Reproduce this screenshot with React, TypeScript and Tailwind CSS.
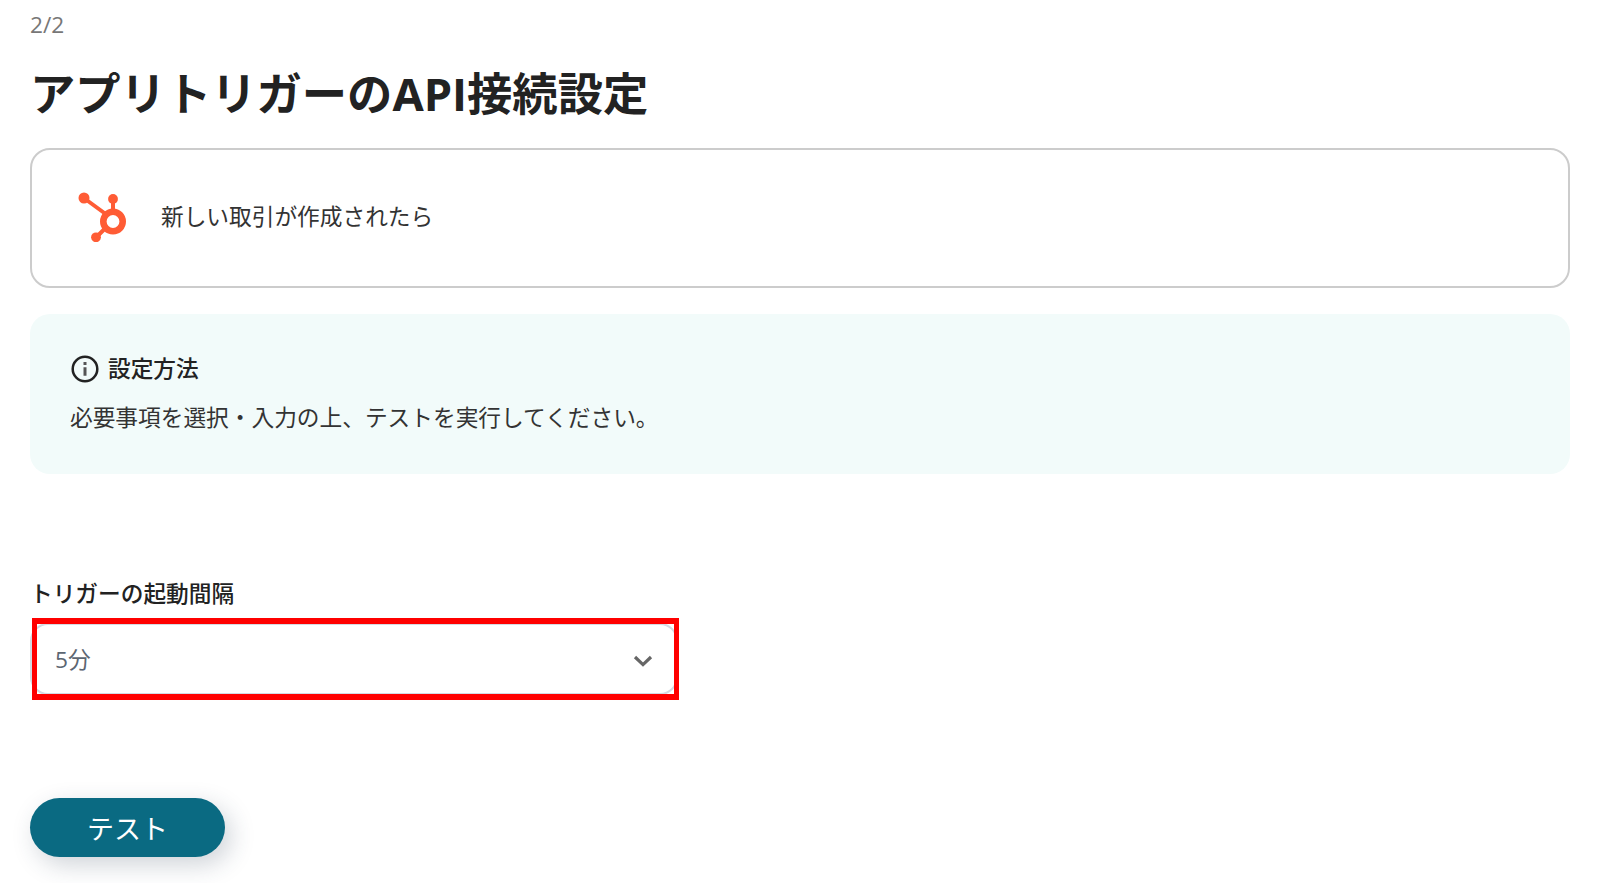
import React from "react";

function HubSpotLogo() {
  return (
    <svg className="h-[50px] w-[50px] shrink-0" viewBox="0 0 50 50" fill="none" stroke="#ff5c35">
      <circle cx="35" cy="29.5" r="9.7" strokeWidth="6.6" />
      <path d="M6.5 6.5 27 21.5M35 7v13M18 45.5l9-9" strokeWidth="4" />
      <g fill="#ff5c35" stroke="none">
        <circle cx="6" cy="6" r="5.5" />
        <circle cx="35" cy="7" r="4.9" />
        <circle cx="18" cy="45.3" r="4.9" />
      </g>
    </svg>
  );
}

function InfoIcon() {
  return (
    <svg className="h-[28px] w-[28px] shrink-0" viewBox="0 0 28 28" fill="none" stroke="#222">
      <circle cx="14" cy="14" r="12.3" strokeWidth="2.5" />
      <path d="M14 12.3v8.4M14 7v3" strokeWidth="3" stroke="#555" />
    </svg>
  );
}

export default function App() {
  return (
    <main className="flex h-[883px] w-[1600px] flex-col overflow-hidden bg-white px-[30px] font-['Open_Sans','Noto_Sans_CJK_JP',sans-serif] text-[22.7px] text-[#222]">
      <p className="mt-[9px] h-[32px] leading-[32px] text-[#777]">2/2</p>
      <h1 className="mt-[21px] h-[64px] text-[45.3px] leading-[64px] font-bold whitespace-nowrap">
        アプリトリガーのAPI接続設定
      </h1>

      <section className="mt-[22px] flex h-[140px] w-[1540px] items-center gap-[33px] rounded-[20px] border-2 border-[#ccc] pb-[3px] pl-[46px]">
        <HubSpotLogo />
        <p className="pt-px leading-8 text-[#333]">新しい取引が作成されたら</p>
      </section>

      <section className="mt-[26px] flex h-[160px] w-[1540px] flex-col rounded-[20px] bg-[#f2fbfa] px-[40px] pt-[39px]">
        <div className="flex h-8 items-center gap-[9px] pl-[1px]">
          <InfoIcon />
          <h2 className="leading-8 font-medium">設定方法</h2>
        </div>
        <p className="mt-[17px] leading-8 text-[#333]">必要事項を選択・入力の上、テストを実行してください。</p>
      </section>

      <label className="mt-[104px] h-8 leading-8 font-medium">トリガーの起動間隔</label>
      <div className="relative mt-[13px] h-[74px] w-[648px]">
        <button className="flex h-[72px] w-full items-center justify-between rounded-[18px] border-2 border-[#d3dae3] pt-[3px] pr-[23px] pl-[23px] text-[#5c6672]">
          <span>5分</span>
          <svg className="h-[12px] w-[20px]" viewBox="0 0 20 12" fill="none" stroke="#666" strokeWidth="3.2">
            <path d="m2 2 8 7.6L18 2" />
          </svg>
        </button>
        <div className="absolute top-[-5px] left-[2px] h-[82px] w-[647px] border-x-5 border-y-6 border-[#f00]" />
      </div>

      <button className="mt-[101px] h-[59px] w-[195px] rounded-full bg-[#0a6a82] text-[27px] leading-[61px] text-white shadow-[6px_8px_24px_rgba(40,60,80,0.22)]">
        テスト
      </button>
    </main>
  );
}
